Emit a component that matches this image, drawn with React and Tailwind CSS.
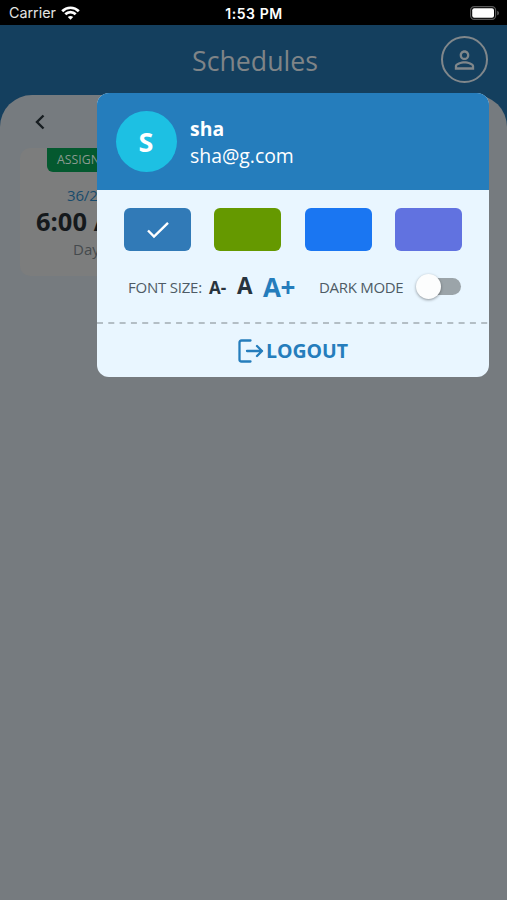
import React, { useState } from 'react';

const THEMES = [
  { id: 'sky', color: 'bg-[#317ab7]' },
  { id: 'olive', color: 'bg-[#659900]' },
  { id: 'blue', color: 'bg-[#1a76f2]' },
  { id: 'violet', color: 'bg-[#6172e0]' }
];

const FONT_SIZES = [
  { id: 'small', label: 'A-', size: 'text-[17px] w-[28px] pt-px' },
  { id: 'medium', label: 'A', size: 'text-[22.5px] w-[26px]' },
  { id: 'large', label: 'A+', size: 'text-[26px] w-[34px] tracking-[-0.02em]' }
];

const StatusBar = () => (
  <div className="grid h-[25px] grid-cols-[1fr_auto_1fr] items-center bg-black pt-[2px] pl-[8px] pr-[7px] font-['Inter',sans-serif] leading-none text-white">
    <div className="flex items-center gap-[5px] pl-px">
      <span className="text-[14.3px] text-[#e4e4e4]">Carrier</span>
      <svg className="mb-px" width="19" height="14" viewBox="0 0 19 14" fill="none" stroke="white" strokeWidth="2.7">
        <path d="M1.2 5.2C5.8.6 13.2.6 17.8 5.2" />
        <path d="M4.3 8.3c2.9-2.9 7.5-2.9 10.4 0" />
        <path d="M9.5 13.8 6.8 11c1.5-1.4 3.9-1.4 5.4 0z" fill="white" stroke="none" />
      </svg>
    </div>
    <span className="text-[14px] font-semibold tracking-[0.04em]">1:53 PM</span>
    <svg className="mb-px justify-self-end" width="30" height="14" viewBox="0 0 30 14">
      <rect x=".6" y=".6" width="25" height="12.8" rx="3.6" fill="none" stroke="#5a5a5a" strokeWidth="1.2" />
      <rect x="2.2" y="2.2" width="21.8" height="9.6" rx="2" fill="white" />
      <path d="M27.2 4.7c2.4.8 2.4 3.8 0 4.6z" fill="#5a5a5a" />
    </svg>
  </div>
);

const Header = () => (
  <header className="grid h-[70px] grid-cols-[1fr_auto_1fr] items-center pr-[19px] pl-[22px]">
    <span />
    <h1 className="pt-[2px] text-[26.7px] leading-none text-[#7f8487]">Schedules</h1>
    <button className="mb-px flex size-[47px] items-center justify-center justify-self-end rounded-full border-2 border-[#80878b]">
      <svg className="-ml-px" width="29" height="30" viewBox="0 0 24 24" fill="#80878b">
        <path d="M12 5.9a2.1 2.1 0 1 1 0 4.2 2.1 2.1 0 0 1 0-4.2m0 9c2.97 0 6.1 1.46 6.1 2.1v1.1H5.9V17c0-.64 3.13-2.1 6.1-2.1M12 4C9.79 4 8 5.79 8 8s1.79 4 4 4 4-1.79 4-4-1.79-4-4-4m0 9c-2.67 0-8 1.34-8 4v3h16v-3c0-2.66-5.33-4-8-4" />
      </svg>
    </button>
  </header>
);

const ShiftCard = () => (
  <div className="ml-[20px] h-[128px] w-[143px] rounded-[10px] bg-[#7c7d7d] whitespace-nowrap">
    <div className="ml-[27px] flex h-[24px] w-[90px] items-center rounded-b-[6px] bg-[#04592f] pl-[10px] text-[12.3px] text-[#8b9a90]">ASSIGNED</div>
    <div className="mt-[13px] pl-[47px] text-[15px] leading-[20px] tracking-[-0.01em] text-[#184b6c]">36/23</div>
    <div className="-mt-px pl-[16px] text-[25.5px] leading-[34px] font-bold text-[#15191c]">6:00 AM</div>
    <div className="pl-[53px] text-[15px] leading-[22px] text-[#454a4d]">Day</div>
  </div>
);

const ProfileMenu = () => {
  const [theme, setTheme] = useState('sky');
  const [fontSize, setFontSize] = useState('large');
  const [dark, setDark] = useState(false);

  return (
    <div className="absolute top-[93px] left-[97px] w-[392px] overflow-hidden rounded-[12px] bg-[#e9f6ff]">
      <div className="flex h-[97px] items-center gap-[13px] bg-[#257dbc] pl-[19px] text-white">
        <div className="flex size-[61px] items-center justify-center rounded-full bg-[#1dc0e3] pt-[2px] pr-px text-[27px] font-bold">S</div>
        <div className="pt-px text-[19.4px] leading-[27px]">
          <div className="font-bold">sha</div>
          <div>sha@g.com</div>
        </div>
      </div>

      <div className="flex justify-between pt-[18px] pr-[27px] pl-[27px]">
        {THEMES.map((item) => (
          <button
            key={item.id}
            onClick={() => setTheme(item.id)}
            className={`flex h-[43px] w-[67px] items-center justify-center rounded-[6px] ${item.color}`}
          >
            {theme === item.id && (
              <svg width="24" height="18" viewBox="0 0 24 18" fill="none" stroke="white" strokeWidth="2.4">
                <path d="m2 9.5 6 6L22 1.8" />
              </svg>
            )}
          </button>
        ))}
      </div>

      <div className="flex h-[71px] items-center pl-[31px] text-[15px] text-[#4e5b65]">
        <span className="w-[81px] pt-[2px] tracking-[-0.015em] whitespace-nowrap">FONT SIZE:</span>
        {FONT_SIZES.map((item) => (
          <button
            key={item.id}
            onClick={() => setFontSize(item.id)}
            className={`text-left leading-none font-bold whitespace-nowrap ${item.size} ${fontSize === item.id ? 'text-[#257dbc]' : 'text-[#28343e]'}`}
          >
            {item.label}
          </button>
        ))}
        <span className="ml-[22px] w-[98px] pt-[2px] tracking-[-0.02em] whitespace-nowrap">DARK MODE</span>
        <button
          onClick={() => setDark(!dark)}
          className={`flex h-[17px] w-[44px] items-center rounded-full bg-[#9ba4a9] ${dark ? 'justify-end' : 'justify-start'}`}
        >
          <span className="-ml-px size-[25px] shrink-0 rounded-full bg-[#fcfdfd] shadow-[0_1px_3px_rgba(0,0,0,0.4)]" />
        </button>
      </div>

      <svg className="block" width="392" height="2">
        <path d="M0 1H392" stroke="#b3bec5" strokeWidth="2" strokeDasharray="6 5.3" />
      </svg>

      <button className="flex h-[53px] w-full items-center justify-center gap-[2px] text-[19.5px] font-bold text-[#257dbc]">
        <svg width="26" height="24" viewBox="0 0 26 24" fill="none" stroke="currentColor" strokeWidth="2.3" strokeLinecap="round" strokeLinejoin="round">
          <path d="M12.5 1.5h-9q-2 0-2 2v17q0 2 2 2h9M9 12h15M19 7l5 5-5 5" />
        </svg>
        LOGOUT
      </button>
    </div>
  );
};

const App = () => (
  <div className="relative h-[900px] w-[507px] overflow-hidden bg-[#143f5e] font-['Open_Sans',sans-serif]">
    <StatusBar />
    <Header />
    <main className="h-[805px] rounded-t-[32px] bg-[#767b7f]">
      <div className="flex h-[53px] items-center pl-[35px]">
        <svg width="10" height="16" viewBox="0 0 10 16" fill="none" stroke="#171d21" strokeWidth="2.4">
          <path d="M8.5 1.5 2 8l6.5 6.5" />
        </svg>
      </div>
      <ShiftCard />
    </main>
    <ProfileMenu />
  </div>
);

export default App;
